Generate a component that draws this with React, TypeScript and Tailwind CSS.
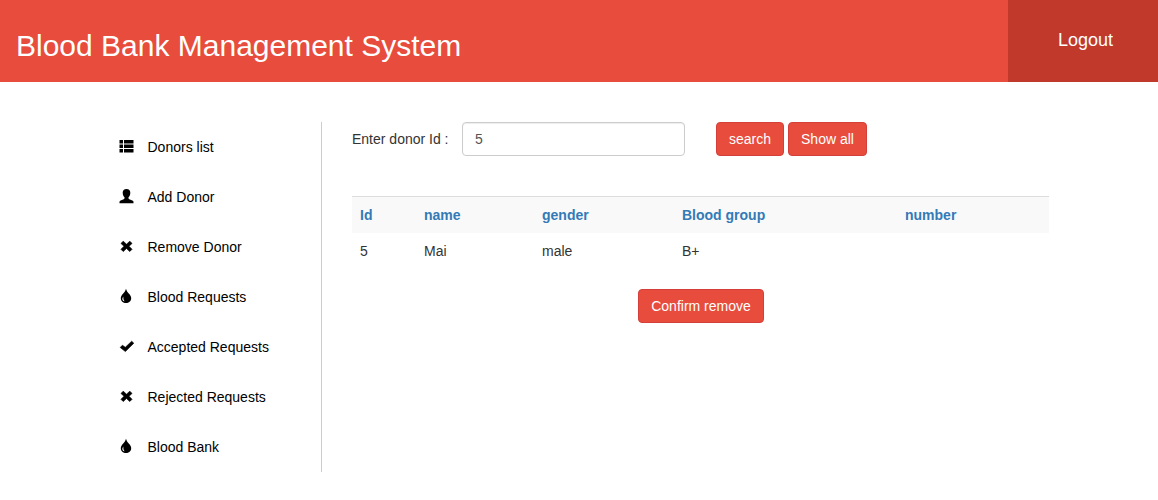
import type { ReactNode } from 'react';

function Glyph({ children }: { children: ReactNode }) {
  return (
    <svg className="h-4 w-4 shrink-0 overflow-visible" viewBox="0 0 16 16" fill="#000">
      {children}
    </svg>
  );
}

const ListIcon = () => (
  <Glyph>
    <path d="M1.500 1H5v3.500H1.500zM6 1H15.500v3.500H6zM1.500 5.500H5v3.500H1.500zM6 5.500H15.500v3.500H6zM1.500 10H5v3.500H1.500zM6 10H15.500v3.500H6z" />
  </Glyph>
);

const UserIcon = () => (
  <Glyph>
    <path d="M8.500 0C11 0 12.300 1.500 12.300 3.700c0 1.900-.8 3.600-1.800 4.600v1c0 .5.300.8.800 1l3 1.300c.8.300 1.200.8 1.200 1.500V14.200h-14v-1.100c0-.7.400-1.200 1.200-1.500l3-1.300c.5-.2.800-.5.800-1v-1C5.500 7.300 4.700 5.600 4.700 3.700 4.700 1.500 6 0 8.500 0z" />
  </Glyph>
);

const RemoveIcon = () => (
  <Glyph>
    <path
      d="M5.200 2.200 8.500 5.200l3.300-3 2.200 2.200-3 2.900 3 3-2.200 2.200-3.300-3-3.300 3L3 10.300l3-3-3-2.900z"
      stroke="#000"
      strokeWidth="0.7"
      strokeLinejoin="round"
    />
  </Glyph>
);

const DropIcon = () => (
  <Glyph>
    <path
      fillRule="evenodd"
      d="M8-.2c.6 2.400 1.800 3.600 3 5 1.300 1.500 2.200 2.800 2.200 4.500 0 2.800-2.300 4.800-5.200 4.800s-5.200-2-5.200-4.800c0-1.700.9-3 2.200-4.500C6.200 3.400 7.400 2.200 8-.2zM5.400 7.500c-1.100 1.300-1.400 2.600-.7 3.700.5.700 1.200 1.100 1.900 1-1-1.100-1.500-2.400-1.200-4.700z"
    />
  </Glyph>
);

const CheckIcon = () => (
  <Glyph>
    <path
      d="M13.700 2.200 15.800 4.200 7.400 12.600 2.200 8.500l2.200-2.300 2.900 2.100z"
      stroke="#000"
      strokeWidth="0.6"
      strokeLinejoin="round"
    />
  </Glyph>
);

const menu = [
  { label: 'Donors list', Icon: ListIcon },
  { label: 'Add Donor', Icon: UserIcon },
  { label: 'Remove Donor', Icon: RemoveIcon },
  { label: 'Blood Requests', Icon: DropIcon },
  { label: 'Accepted Requests', Icon: CheckIcon },
  { label: 'Rejected Requests', Icon: RemoveIcon },
  { label: 'Blood Bank', Icon: DropIcon },
];

function Button({ children, className }: { children: ReactNode; className: string }) {
  return (
    <button
      className={`h-[34px] rounded border border-[#d43f3a] bg-[#e74c3c] text-center text-sm text-white ${className}`}
    >
      {children}
    </button>
  );
}

export default function App() {
  return (
    <div className="min-h-[500px] bg-white font-['Liberation_Sans',Arial,sans-serif] text-sm text-[#333]">
      <header className="flex h-[82px] justify-between bg-[#e74c3c] text-white">
        <h1 className="pt-[29px] pl-4 text-[30px] leading-[33px]">Blood Bank Management System</h1>
        <a href="#" className="w-[150px] bg-[#c0392b] pt-[27px] pl-[50px] text-lg leading-[26px]">
          Logout
        </a>
      </header>

      <div className="flex pt-10 pl-[118px]">
        <nav className="w-[204px] border-r border-[#ccc]">
          {menu.map(({ label, Icon }) => (
            <a key={label} href="#" className="flex h-[50px] items-center gap-[13.5px] text-black">
              <Icon />
              <span>{label}</span>
            </a>
          ))}
        </nav>

        <main className="ml-[30px] w-[697px]">
          <form className="flex">
            <label htmlFor="donor" className="w-[110px] pt-[7px]">
              Enter donor Id :
            </label>
            <input
              id="donor"
              defaultValue="5"
              className="mr-[31px] h-[34px] w-[223px] rounded border border-[#ccc] px-3 text-[#555] shadow-[inset_0_1px_1px_rgba(0,0,0,0.075)]"
            />
            <Button className="mr-1 w-[68px]">search</Button>
            <Button className="w-[79px]">Show all</Button>
          </form>

          <table className="mt-10 w-full table-fixed border-separate border-spacing-0 text-left">
            <colgroup>
              <col className="w-[64px]" />
              <col className="w-[118px]" />
              <col className="w-[140px]" />
              <col className="w-[223px]" />
              <col className="w-[152px]" />
            </colgroup>
            <thead>
              <tr className="h-[37px] bg-[#f9f9f9] text-[#337ab7]">
                {['Id', 'name', 'gender', 'Blood group', 'number'].map((heading) => (
                  <th key={heading} className="border-t border-[#ddd] p-2 font-bold">
                    {heading}
                  </th>
                ))}
              </tr>
            </thead>
            <tbody>
              <tr className="h-9">
                <td className="p-2">5</td>
                <td className="p-2">Mai</td>
                <td className="p-2">male</td>
                <td className="p-2">B+</td>
                <td className="p-2" />
              </tr>
            </tbody>
          </table>

          <div className="mt-5 flex justify-center pl-px">
            <Button className="w-[126px]">Confirm remove</Button>
          </div>
        </main>
      </div>
    </div>
  );
}
